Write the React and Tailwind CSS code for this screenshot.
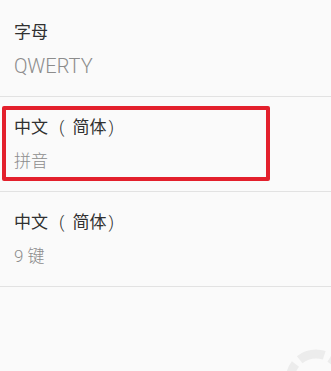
import React from 'react';

const zh = (
  <>
    <span>中文</span>
    <span className="ml-[11px] mr-[8px] font-light">(</span>
    <span>简体</span>
    <span className="ml-[2px] font-light">)</span>
  </>
);

const rows = [
  { title: '字母', sub: 'QWERTY', latin: true },
  { title: zh, sub: '拼音', selected: true },
  { title: zh, sub: '9 键' },
];

function Spinner() {
  return (
    <svg
      className="absolute left-[284px] top-[348px]"
      width="64"
      height="64"
      viewBox="0 0 64 64"
    >
      <circle
        cx="32"
        cy="32"
        r="26"
        fill="none"
        stroke="#ececec"
        strokeWidth="9"
        strokeDasharray="26 6"
        transform="rotate(-200 32 32)"
      />
    </svg>
  );
}

export default function App() {
  return (
    <div
      className="relative h-[371px] w-full overflow-hidden bg-[#fafafa] pt-[2px]"
      style={{ fontFamily: 'Roboto, "Noto Sans CJK SC", sans-serif' }}
    >
      {rows.map((r, i) => (
        <div
          key={i}
          className="relative flex h-[95px] flex-col border-b border-[#e2e2e2] px-[14px] pt-[18px]"
        >
          <div className="flex h-6 items-center text-[17px] leading-6 text-[#303030]">{r.title}</div>
          <div className="mt-[10px] h-6 text-[17px] leading-6 font-light text-[#8c8c8c]">
            {r.latin ? <span className="text-[20px] leading-6">{r.sub}</span> : r.sub}
          </div>
          {r.selected && (
            <div className="absolute left-[2px] top-[9px] h-[75px] w-[268px] rounded-[2px] border-4 border-[#e3202c]" />
          )}
        </div>
      ))}
      <Spinner />
    </div>
  );
}
